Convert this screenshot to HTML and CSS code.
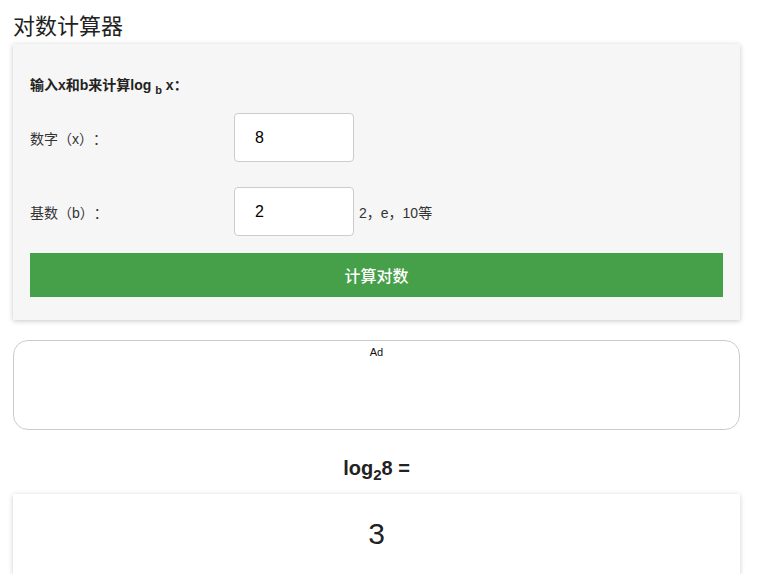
FILE: index.html
```html
<!DOCTYPE html>
<html lang="zh-CN">
<head>
<meta charset="utf-8">
<title>对数计算器</title>
<link rel="stylesheet" href="styles.css">
</head>
<body>
<div class="page">
  <h1 class="title">对数计算器</h1>
  <div class="panel">
    <div class="panel-head">输入x和b来计算log <sub>b</sub> x：</div>
    <div class="row">
      <label class="label">数字（x）：</label>
      <input class="field" type="text" value="8">
    </div>
    <div class="row row-2">
      <label class="label">基数（b）：</label>
      <input class="field" type="text" value="2">
      <span class="hint">2，e，10等</span>
    </div>
    <button class="btn">计算对数</button>
  </div>
  <div class="ad"><span class="ad-label">Ad</span></div>
  <div class="result-head">log<sub>2</sub>8 =</div>
  <div class="result">3</div>
</div>
</body>
</html>
```
FILE: styles.css
```css
html, body {
  margin: 0;
  padding: 0;
  background: #fff;
}
body {
  font-family: "Liberation Sans", Arial, "Noto Sans CJK SC", sans-serif;
  color: #222;
  text-spacing-trim: space-all;
}
.page {
  padding: 0 23px 0 13px;
}
.title {
  font-size: 22px;
  font-weight: normal;
  line-height: 28px;
  margin: 13px 0 3px;
  color: #222;
}
.panel {
  background: #f6f6f6;
  box-shadow: 0 1px 5px rgba(0,0,0,0.22);
  padding: 31px 17px 23px;
}
.panel-head {
  font-size: 14px;
  font-weight: bold;
  line-height: 20px;
  color: #222;
}
.panel-head sub {
  font-size: 11px;
  vertical-align: -4px;
  line-height: 0;
}
.row {
  display: flex;
  align-items: center;
  margin-top: 18px;
}
.row-2 {
  margin-top: 25px;
}
.label {
  width: 204px;
  font-size: 14px;
  color: #333;
}
.field {
  box-sizing: border-box;
  width: 120px;
  height: 49px;
  border: 1px solid #ccc;
  border-radius: 4px;
  background: #fff;
  padding: 0 0 0 20px;
  font-family: "Liberation Sans", Arial, sans-serif;
  font-size: 16px;
  color: #000;
  outline: none;
}
.hint {
  margin-left: 5px;
  font-size: 14px;
  color: #333;
}
.btn {
  display: block;
  width: 100%;
  height: 44px;
  margin-top: 17px;
  border: none;
  background: #46a049;
  color: #fff;
  font-family: "Liberation Sans", Arial, "Noto Sans CJK SC", sans-serif;
  font-size: 16px;
  font-weight: 500;
}
.ad {
  box-sizing: border-box;
  height: 90px;
  margin-top: 20px;
  border: 1px solid #ccc;
  border-radius: 15px;
  text-align: center;
  padding-top: 1px;
}
.ad-label {
  font-size: 11px;
  color: #111;
}
.result-head {
  text-align: center;
  font-size: 20px;
  font-weight: bold;
  line-height: 28px;
  margin: 24px 0 12px;
  color: #222;
}
.result-head sub {
  font-size: 15px;
  vertical-align: -5px;
  line-height: 0;
}
.result {
  height: 80px;
  background: #fff;
  box-shadow: 0 1px 5px rgba(0,0,0,0.2);
  display: flex;
  align-items: center;
  justify-content: center;
  font-size: 30px;
  color: #222;
}
```
